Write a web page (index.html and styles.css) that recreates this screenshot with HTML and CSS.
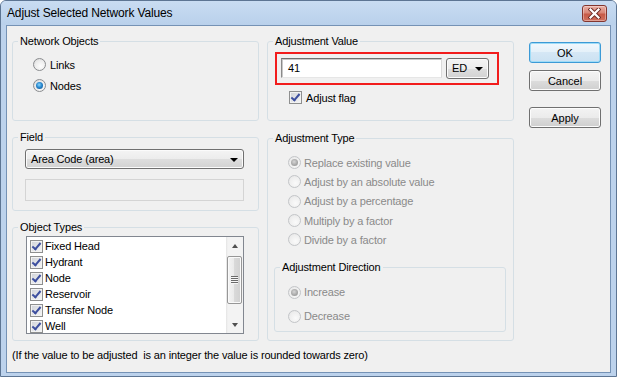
FILE: index.html
```html
<!DOCTYPE html>
<html>
<head>
    <meta charset="UTF-8">
    <title>Adjust Selected Network Values</title>
    <link rel="stylesheet" href="styles.css">
</head>
<body>
    <div class="window">
        <div class="titlebar">
            <span class="title">Adjust Selected Network Values</span>
            <span class="close-btn">
                <svg width="13" height="11" viewBox="0 0 13 11">
                    <path d="M2.5 1.5 L10.5 9.5 M10.5 1.5 L2.5 9.5" stroke="#6b2a24" stroke-width="4" stroke-linecap="square"/>
                    <path d="M2.5 1.5 L10.5 9.5 M10.5 1.5 L2.5 9.5" stroke="#ffffff" stroke-width="2.2" stroke-linecap="square"/>
                </svg>
            </span>
        </div>

        <div class="client">
            <div class="columns">
                <!-- left column -->
                <div class="col">
                    <fieldset class="group g-objects">
                        <legend>Network Objects</legend>
                        <div class="group-body">
                            <div class="opt"><span class="radio"></span>Links</div>
                            <div class="opt"><span class="radio checked"></span>Nodes</div>
                        </div>
                    </fieldset>

                    <fieldset class="group g-field">
                        <legend>Field</legend>
                        <div class="group-body">
                            <div class="dropdown field-select">Area Code (area)</div>
                            <div class="disabled-box"></div>
                        </div>
                    </fieldset>

                    <fieldset class="group g-types">
                        <legend>Object Types</legend>
                        <div class="group-body">
                            <div class="list">
                                <div class="list-items">
                                    <div class="list-item"><span class="check"></span>Fixed Head</div>
                                    <div class="list-item"><span class="check"></span>Hydrant</div>
                                    <div class="list-item"><span class="check"></span>Node</div>
                                    <div class="list-item"><span class="check"></span>Reservoir</div>
                                    <div class="list-item"><span class="check"></span>Transfer Node</div>
                                    <div class="list-item"><span class="check"></span>Well</div>
                                </div>
                                <div class="scrollbar">
                                    <div class="sb-btn up"></div>
                                    <div class="sb-thumb"><span class="gripper"></span></div>
                                    <div class="sb-space"></div>
                                    <div class="sb-btn down"></div>
                                </div>
                            </div>
                        </div>
                    </fieldset>
                </div>

                <!-- middle column -->
                <div class="col">
                    <fieldset class="group g-value">
                        <legend>Adjustment Value</legend>
                        <div class="group-body">
                            <div class="highlight">
                                <div class="value-input">41</div>
                                <div class="dropdown unit-select">ED</div>
                            </div>
                            <div class="flag-row"><span class="check"></span>Adjust flag</div>
                        </div>
                    </fieldset>

                    <fieldset class="group g-type">
                        <legend>Adjustment Type</legend>
                        <div class="group-body">
                            <div class="opt disabled"><span class="radio checked"></span>Replace existing value</div>
                            <div class="opt disabled"><span class="radio"></span>Adjust by an absolute value</div>
                            <div class="opt disabled"><span class="radio"></span>Adjust by a percentage</div>
                            <div class="opt disabled"><span class="radio"></span>Multiply by a factor</div>
                            <div class="opt disabled"><span class="radio"></span>Divide by a factor</div>
                        </div>

                        <fieldset class="group g-dir">
                            <legend>Adjustment Direction</legend>
                            <div class="group-body">
                                <div class="opt disabled"><span class="radio checked"></span>Increase</div>
                                <div class="opt disabled"><span class="radio"></span>Decrease</div>
                            </div>
                        </fieldset>
                    </fieldset>
                </div>

                <!-- buttons -->
                <div class="buttons">
                    <button class="btn btn-default">OK</button>
                    <button class="btn btn-cancel">Cancel</button>
                    <button class="btn btn-apply">Apply</button>
                </div>
            </div>

            <p class="note">(If the value to be adjusted  is an integer the value is rounded towards zero)</p>
        </div>
    </div>
</body>
</html>
```

FILE: styles.css
```css
body {
    margin: 0;
    font-family: "Liberation Sans", Arial, sans-serif;
    font-size: 11px;
    letter-spacing: -0.15px;
    color: #000;
}
.window {
    width: 617px;
    height: 377px;
    box-sizing: border-box;
    border: 1px solid #5d7593;
    border-radius: 6px 6px 0 0;
    background: #bcd2ec;
    display: flex;
    flex-direction: column;
    overflow: hidden;
}
.titlebar {
    height: 24px;
    flex: none;
    display: flex;
    align-items: flex-start;
    background: linear-gradient(#c9dcf2, #b9d0eb);
}
.title {
    flex: 1;
    font-size: 12px;
    line-height: 24px;
    padding-left: 6px;
}
.close-btn {
    width: 25px;
    height: 17px;
    margin: 4px 9px 0 0;
    box-sizing: border-box;
    border: 1px solid #83362f;
    border-radius: 3px;
    background: linear-gradient(#eab0a6, #d98677 45%, #c75a47 55%, #d0705e);
    box-shadow: inset 0 0 0 1px rgba(255,255,255,0.35);
    display: flex;
    align-items: center;
    justify-content: center;
}
.client {
    flex: 1;
    margin: 0 5px 3px;
    border: 1px solid #7592b5;
    background: #f0f0f0;
    padding: 9px 0 0 5px;
}
.columns {
    display: flex;
}
.col {
    width: 247px;
    display: flex;
    flex-direction: column;
}
.col + .col {
    margin-left: 8px;
}
.buttons {
    width: 72px;
    margin-left: 15px;
    padding-top: 7px;
    display: flex;
    flex-direction: column;
}

/* group boxes */
.group {
    margin: 0;
    padding: 0;
    min-width: 0;
    box-sizing: border-box;
    border: 1px solid #d5dfe5;
    border-radius: 3px;
}
.group legend {
    padding: 0 2px;
    margin-left: 5px;
    font-size: 11px;
    line-height: 13px;
}
.g-objects { height: 86px; }
.g-objects .group-body { padding: 6px 0 0 20px; }
.g-field { height: 80px; margin-top: 10px; }
.g-field .group-body { padding: 5px 0 0 12px; }
.g-types { height: 120px; margin-top: 10px; }
.g-types .group-body { padding: 2px 0 0 13px; }
.g-value { height: 86px; }
.g-value .group-body { padding: 4px 0 0 7px; }
.g-type { height: 209px; margin-top: 11px; }
.g-type > .group-body { padding: 8px 0 0 20px; }
.g-dir {
    height: 71px;
    margin: 12px 7px 0 6px;
}
.g-dir .group-body { padding: 6px 0 0 13px; }

/* radio options */
.opt {
    display: flex;
    align-items: center;
    height: 21px;
}
.g-type > .group-body .opt { height: 19.3px; }
.g-dir .opt { height: 24px; }
.opt.disabled { color: #8a8a8a; }
.g-type .opt .radio { margin-right: 3px; }
.radio {
    position: relative;
    flex: none;
    width: 13px;
    height: 13px;
    box-sizing: border-box;
    margin-right: 4px;
    border-radius: 50%;
    border: 1px solid #8a8c8f;
    background: radial-gradient(circle at 60% 65%, #fdfdfd 0, #ececec 55%, #d2d2d2 100%);
}
.radio.checked:after {
    content: "";
    position: absolute;
    left: 2px;
    top: 2px;
    width: 7px;
    height: 7px;
    border-radius: 50%;
    background: radial-gradient(circle at 45% 40%, #8ad9ff 0, #2c8ad0 45%, #0b4c87 100%);
}
.disabled .radio {
    border-color: #c3c5c8;
    background: radial-gradient(circle at 60% 65%, #fafafa 0, #eeeeee 60%, #e2e2e2 100%);
}
.disabled .radio.checked:after {
    background: radial-gradient(circle at 45% 40%, #d6d6d6 0, #a9a9a9 55%, #8f8f8f 100%);
}

/* checkbox */
.check {
    position: relative;
    flex: none;
    width: 13px;
    height: 13px;
    box-sizing: border-box;
    margin-right: 2px;
    border: 1px solid #8e8f8f;
    background: linear-gradient(135deg, #cfd2d8, #f6f6f6);
    box-shadow: inset 0 0 0 1px #f2f2f2;
}
.check:after {
    content: "";
    position: absolute;
    left: 3px;
    top: 0px;
    width: 3px;
    height: 7px;
    border-right: 2px solid #3d4f9f;
    border-bottom: 2px solid #3d4f9f;
    transform: rotate(40deg);
}

/* dropdowns */
.dropdown {
    position: relative;
    box-sizing: border-box;
    border: 1px solid #707070;
    border-radius: 3px;
    background: linear-gradient(#f4f4f4, #ececec 50%, #dedede 50%, #d2d2d2);
    box-shadow: inset 0 0 0 1px #fbfbfb;
    line-height: 18px;
    padding-left: 5px;
}
.dropdown:after {
    content: "";
    position: absolute;
    top: 8px;
    right: 5px;
    border-left: 4px solid transparent;
    border-right: 4px solid transparent;
    border-top: 4px solid #000;
}
.field-select {
    width: 219px;
    height: 20px;
}
.disabled-box {
    width: 219px;
    height: 22px;
    margin-top: 10px;
    box-sizing: border-box;
    border: 1px solid #d4d4d4;
    background: #f0f0f0;
}

/* list */
.list {
    width: 218px;
    height: 98px;
    box-sizing: border-box;
    border: 1px solid #828790;
    background: #fff;
    display: flex;
}
.list-items {
    flex: 1;
    padding: 1px 0 0 3px;
}
.list-item {
    display: flex;
    align-items: center;
    height: 16px;
}
.scrollbar {
    width: 17px;
    display: flex;
    flex-direction: column;
    background: linear-gradient(to right, #e4e4e4, #f3f3f3 2px, #f3f3f3);
}
.sb-btn {
    height: 17px;
    flex: none;
    display: flex;
    align-items: center;
    justify-content: center;
}
.sb-btn.up:after {
    content: "";
    border-left: 3.5px solid transparent;
    border-right: 3.5px solid transparent;
    border-bottom: 4px solid #505050;
}
.sb-btn.down:after {
    content: "";
    border-left: 3.5px solid transparent;
    border-right: 3.5px solid transparent;
    border-top: 4px solid #505050;
}
.sb-thumb {
    height: 48px;
    margin: 2px 1px 0;
    box-sizing: border-box;
    border: 1px solid #979797;
    border-radius: 2px;
    background: linear-gradient(to right, #f4f4f4, #e9e9e9 50%, #d9d9d9 50%, #d0d0d0);
    box-shadow: inset 0 0 0 1px #fafafa;
    display: flex;
    align-items: center;
    justify-content: center;
}
.gripper {
    width: 7px;
    height: 8px;
    background: repeating-linear-gradient(#6a6a6a 0, #6a6a6a 1px, #f6f6f6 1px, #f6f6f6 2px);
}
.sb-space { flex: 1; }

/* adjustment value */
.highlight {
    width: 224px;
    height: 33px;
    box-sizing: border-box;
    border: 2px solid #f21c1c;
    padding: 4px 0 0 4px;
    display: flex;
    gap: 4px;
}
.value-input {
    width: 161px;
    height: 20px;
    box-sizing: border-box;
    border: 1px solid;
    border-color: #6f6f6f #dadada #e6e6e6 #8a8a8a;
    box-shadow: inset 1px 1px 0 #c8c8c8;
    background: #fff;
    padding-left: 6px;
    line-height: 18px;
}
.unit-select {
    width: 43px;
    height: 21px;
    line-height: 19px;
}
.unit-select:after {
    top: 8px;
    right: 5px;
}
.flag-row {
    display: flex;
    align-items: center;
    height: 17px;
    margin-top: 4px;
    padding-left: 14px;
}
.flag-row .check { margin-right: 4px; }

/* buttons */
.btn {
    width: 72px;
    height: 21px;
    padding: 0;
    box-sizing: border-box;
    font-family: "Liberation Sans", Arial, sans-serif;
    font-size: 11px;
    color: #000;
    border: 1px solid #707070;
    border-radius: 3px;
    background: linear-gradient(#f3f3f3, #ebebeb 50%, #dddddd 50%, #cfcfcf);
    box-shadow: inset 0 0 0 1px #fcfcfc;
}
.btn-default {
    border-color: #3c9ad6;
    background: linear-gradient(#f1f8fd, #e4f0f9 50%, #d5e7f5 50%, #cbe1f2);
    box-shadow: inset 0 0 0 1px #9fdcf7;
}
.btn-cancel { margin-top: 7px; }
.btn-apply { margin-top: 16px; }

.note {
    margin: 8px 0 0;
    line-height: 13px;
    white-space: pre;
}
```
